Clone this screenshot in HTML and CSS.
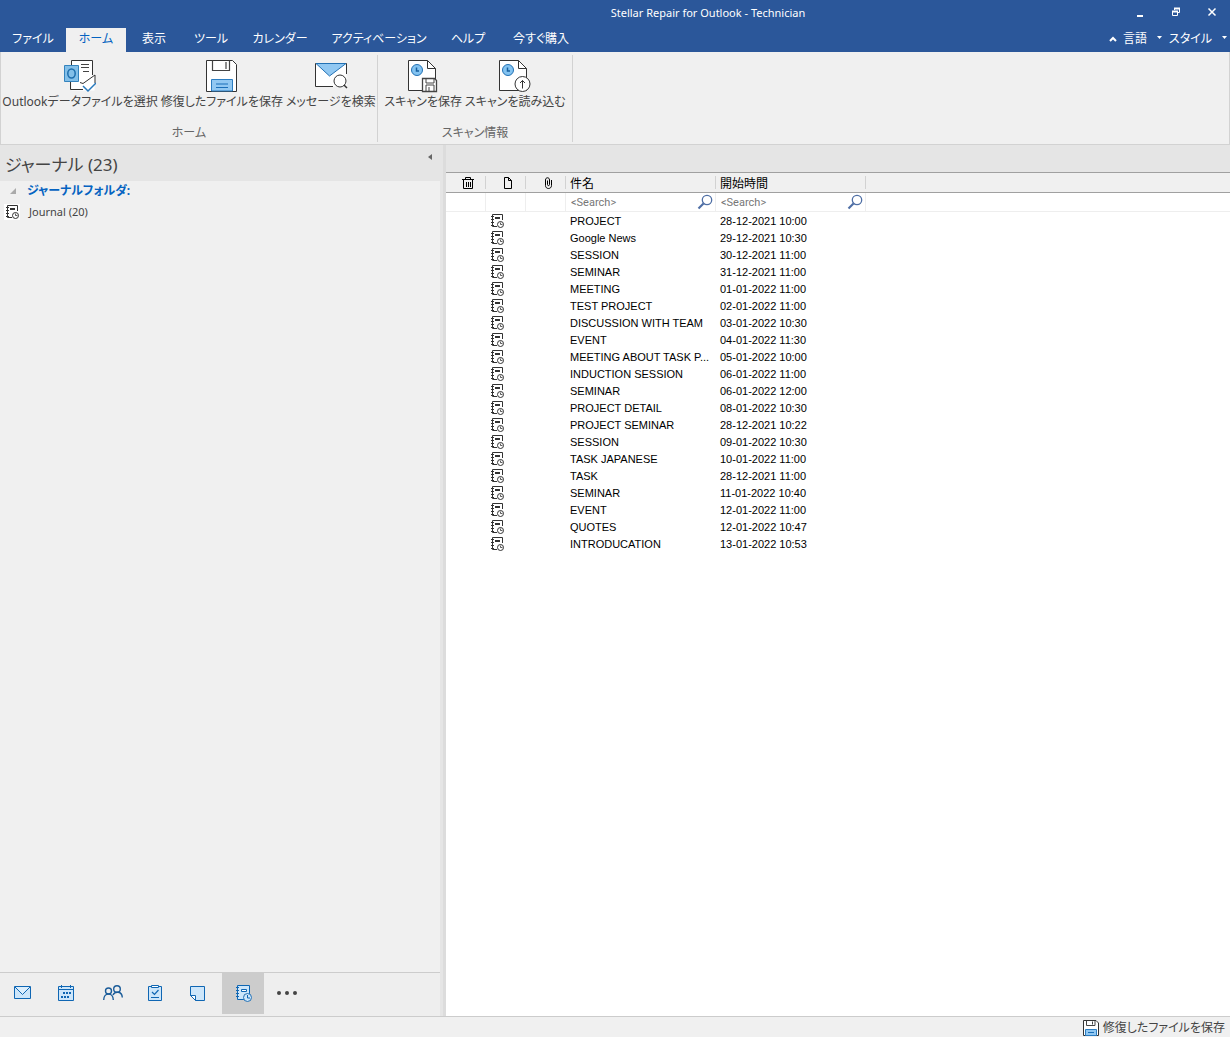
FILE: index.html
```html
<!DOCTYPE html>
<html lang="ja">
<head>
<meta charset="utf-8">
<title>Stellar Repair for Outlook - Technician</title>
<link rel="stylesheet" href="styles.css">
</head>
<body>
<svg class="sprite" aria-hidden="true">
  <symbol id="journal" viewBox="0 0 14 14">
    <path d="M12.500 6V.5h-10v12H7M1 2.500h3M1 5.500h3M1 8.500h3M1 11.500h3" fill="none" stroke="#333"/>
    <path d="M5 4h5" stroke="#333" stroke-width="2"/>
    <circle cx="10.500" cy="10.500" r="3" fill="#fff" stroke="#333"/>
    <path d="M10.500 8.500v2h2" fill="none" stroke="#333" stroke-width=".8"/>
  </symbol>
  <symbol id="lens" viewBox="0 0 16 16">
    <circle cx="10" cy="6" r="4.700" fill="none" stroke="#4f6fa5" stroke-width="1.300"/>
    <path d="M6.500 9.500L1.500 14.500" stroke="#4f6fa5" stroke-width="2.200"/>
  </symbol>
  <symbol id="floppy" viewBox="0 0 32 32">
    <path d="M.5.5h26l4 4v27H.5z" fill="#fff" stroke="#333"/>
    <path d="M6.500.5v10h17V.5M20 2v7" fill="none" stroke="#444" stroke-width="1.200"/>
    <path d="M5.500 31V19.500h21V31z" fill="#91c8f2" stroke="#2b7cc0"/>
    <path d="M10 24h12M10 27.500h12" stroke="#1b6fb8" stroke-width="1.200"/>
  </symbol>
  <symbol id="scan" viewBox="0 0 32 34">
    <path d="M1.500 1.500h19l8 8v22h-27z" fill="#fff" stroke="#333"/>
    <path d="M20.500 1.500v8h8" fill="none" stroke="#333"/>
    <circle cx="10" cy="11" r="5.500" fill="#83c3f1" stroke="#2271b4"/>
    <path d="M9.500 8.500v3.500H12" fill="none" stroke="#17609f" stroke-width="1.500"/>
  </symbol>
</svg>

<header class="titlebar">
  <div class="caption">
    <h1 class="caption-text">Stellar Repair for Outlook - Technician</h1>
    <div class="window-buttons">
      <button aria-label="Minimize"><svg width="10" height="10"><path d="M2 9h6" stroke="#fff" stroke-width="2"/></svg></button>
      <button aria-label="Restore"><svg width="10" height="10"><path d="M3.500 3V1.500h5v4H7" fill="none" stroke="#fff"/><path d="M3 1.500h6" stroke="#fff" stroke-width="2"/><path d="M1.500 4.500h5v4h-5z" fill="none" stroke="#fff"/><path d="M1 4.500h6" stroke="#fff" stroke-width="2"/></svg></button>
      <button aria-label="Close"><svg width="10" height="10"><path d="M1.500 1.500l7 7M8.500 1.500l-7 7" stroke="#fff" stroke-width="1.500"/></svg></button>
    </div>
  </div>
  <div class="tab-row">
    <nav class="tabs">
      <button>ファイル</button>
      <button class="selected">ホーム</button>
      <button>表示</button>
      <button>ツール</button>
      <button>カレンダー</button>
      <button>アクティベーション</button>
      <button>ヘルプ</button>
      <button>今すぐ購入</button>
    </nav>
    <div class="tab-tools">
      <button aria-label="Collapse ribbon"><svg width="8" height="8"><path d="M1 6l3-3 3 3" fill="none" stroke="#fff" stroke-width="2"/></svg></button>
      <button>言語<svg width="6" height="10"><path d="M0 2h5L2.500 5z" fill="#fff"/></svg></button>
      <button>スタイル<svg width="6" height="10"><path d="M0 2h5L2.500 5z" fill="#fff"/></svg></button>
    </div>
  </div>
</header>

<section class="ribbon">
  <div class="group group-home">
    <div class="commands">
      <button class="command">
        <svg width="32" height="34" viewBox="0 0 32 34">
          <path d="M7.500 1.500h21v16l2-2v16h-23z" fill="#fff"/>
          <path d="M7.500 6V1.500h21V16M6.500 22v8.500H19M16 23.500l3 1 12-8.500v8" fill="none" stroke="#333"/>
          <path d="M17 5.500h8M17 8.500h8M19 12.500h6" stroke="#444"/>
          <path d="M.5 6.500h14v16H.5z" fill="#83bfe8" stroke="#3483bd"/>
          <ellipse cx="7.500" cy="14.500" rx="3.700" ry="4.500" fill="none" stroke="#1d6ead" stroke-width="1.500"/>
          <path d="M19 27l5 5 8-8" fill="none" stroke="#2779bd" stroke-width="1.500"/>
        </svg>
        <span>Outlookデータファイルを選択</span>
      </button>
      <button class="command">
        <svg width="32" height="34" viewBox="0 -1 32 34"><use href="#floppy" width="32" height="32"/></svg>
        <span>修復したファイルを保存</span>
      </button>
      <button class="command">
        <svg width="34" height="34" viewBox="0 0 34 34">
          <path d="M1.500 4.500h31v23h-31z" fill="#fff"/>
          <path d="M19 27.500H1.500v-23h31V15" fill="none" stroke="#333"/>
          <path d="M2 4.500h30L15.500 17z" fill="#91c8f2" stroke="#2271b4"/>
          <circle cx="26" cy="22" r="6" fill="#fff" stroke="#333"/>
          <path d="M30 26l3 3" stroke="#333" stroke-width="1.500"/>
        </svg>
        <span>メッセージを検索</span>
      </button>
    </div>
    <div class="group-name">ホーム</div>
  </div>
  <div class="group group-scan">
    <div class="commands">
      <button class="command">
        <svg width="32" height="34" viewBox="0 0 32 34">
          <use href="#scan" width="32" height="34"/>
          <path d="M15.500 19.500h12l2 2v11h-14z" fill="#fff" stroke="#444" stroke-width="1.300"/>
          <path d="M19 20v4h8v-4M19 32v-6h8v6M22 28v4" fill="none" stroke="#444"/>
        </svg>
        <span>スキャンを保存</span>
      </button>
      <button class="command">
        <svg width="34" height="34" viewBox="0 0 34 34">
          <use href="#scan" width="32" height="34"/>
          <circle cx="24.500" cy="25" r="7.500" fill="#fff" stroke="#333"/>
          <path d="M24.500 29.500v-8M22 24l2.500-2.500L27 24" fill="none" stroke="#333"/>
        </svg>
        <span>スキャンを読み込む</span>
      </button>
    </div>
    <div class="group-name">スキャン情報</div>
  </div>
</section>

<main class="workspace">
  <aside class="sidebar">
    <div class="sidebar-head">
      <h2>ジャーナル (23)</h2>
      <button aria-label="Collapse pane"><svg width="6" height="8"><path d="M5 1v6L1 4z" fill="#666"/></svg></button>
    </div>
    <div class="folders">
      <button class="folder-root"><svg width="6" height="6"><path d="M6 0v6H0z" fill="#aaa"/></svg>ジャーナルフォルダ:</button>
      <button class="folder"><svg class="folder-icon" width="16" height="16" viewBox="-1 -1 16 16"><use href="#journal" width="14" height="14"/></svg>Journal (20)</button>
    </div>
    <nav class="modules">
      <button aria-label="Mail"><svg width="18" height="16"><path d="M1.500 1.500h16v12h-16z" fill="#cde6fa" stroke="#0f66b3"/><path d="M2 2l7.500 7.500L17 2" fill="#dceefc" stroke="#0f66b3"/></svg></button>
      <button aria-label="Calendar"><svg width="16" height="18"><path d="M.5 2.500h15v14H.5z" fill="#cde6fa" stroke="#0f66b3"/><path d="M0 5.500h16M3.500 1v3M12.500 1v3" stroke="#0f66b3"/><path d="M5 9h8M3 13h8" stroke="#0f66b3" stroke-width="2" stroke-dasharray="2 1"/></svg></button>
      <button aria-label="People"><svg width="20" height="18" fill="none" stroke="#1b5c99" stroke-width="1.400"><circle cx="5.500" cy="7" r="3"/><circle cx="14" cy="5" r="3.300"/><path d="M.7 16c0-8 9.600-8 9.600 0M10 11c2-4 9-4 9.300 2.500"/></svg></button>
      <button aria-label="Tasks"><svg width="16" height="18"><path d="M1.500 2.500h13v14h-13z" fill="#cde6fa" stroke="#0f66b3"/><path d="M4.500 1.500h7v2h-7z" fill="#fff" stroke="#0f66b3"/><path d="M5 8l2.500 2.500L11.500 6M4 13.500h8" fill="none" stroke="#0f66b3" stroke-width="1.200"/></svg></button>
      <button aria-label="Notes"><svg width="16" height="18"><path d="M1.500 2.500h14v14h-9l-5-5z" fill="#cde6fa" stroke="#0f66b3"/><path d="M1.500 11.500h5v5z" fill="#fff" stroke="#0f66b3"/></svg></button>
      <button class="current" aria-label="Journal"><svg width="18" height="18"><path d="M3.500 1.500h12v14h-12z" fill="#cde6fa" stroke="#0f66b3"/><path d="M2 3.500h3M2 6.500h3M2 9.500h3M2 12.500h3" stroke="#0f66b3"/><path d="M7.500 5.500h5v2h-5z" fill="#fff" stroke="#0f66b3"/><circle cx="13.500" cy="13.500" r="4" fill="#cde6fa" stroke="#2671b3"/><path d="M13.500 11v3H16" fill="none" stroke="#0f66b3"/></svg></button>
      <button aria-label="More"><svg width="22" height="8" fill="#444"><circle cx="3" cy="4" r="2"/><circle cx="11" cy="4" r="2"/><circle cx="19" cy="4" r="2"/></svg></button>
    </nav>
  </aside>

  <section class="content">
    <table class="entries">
      <colgroup><col class="narrow"><col class="narrow"><col class="narrow"><col class="wide"><col class="wide"><col></colgroup>
      <thead>
        <tr class="titles">
          <th class="glyph"><svg role="img" aria-label="Deleted" width="12" height="12"><path d="M0 2.500h12M3.500 2V.5h5V2M1.500 3v8.500h9V3M4.500 5v5M6.500 5v5M8.500 5v5" fill="none" stroke="#000"/></svg></th>
          <th class="glyph"><svg role="img" aria-label="Type" width="10" height="12"><path d="M1.500.5h4l3 3v8h-7zM5.500.5v3h3" fill="none" stroke="#000"/></svg></th>
          <th class="glyph"><svg role="img" aria-label="Attachment" width="8" height="12"><path d="M3.500 3.500v4c0 1.500 2 1.500 2 0V3c0-3-4-3-4 0v5.500c0 4 6 4 6 0V3" fill="none" stroke="#000"/></svg></th>
          <th class="label">件名</th>
          <th class="label">開始時間</th>
          <th class="rest"></th>
        </tr>
        <tr class="filters">
          <td></td><td></td><td></td>
          <td><label class="search"><input type="text" placeholder="&lt;Search&gt;" aria-label="件名"><svg width="16" height="16"><use href="#lens"/></svg></label></td>
          <td><label class="search"><input type="text" placeholder="&lt;Search&gt;" aria-label="開始時間"><svg width="16" height="16"><use href="#lens"/></svg></label></td>
          <td class="rest"></td>
        </tr>
      </thead>
      <tbody id="rows"></tbody>
    </table>
  </section>
</main>

<footer class="status">
  <button><svg width="16" height="16" viewBox="0 0 32 32"><path d="M1 1h25l5 5v25H1z" fill="#fff" stroke="#333" stroke-width="2"/><path d="M7 1v10h17V1M19 3v6" fill="none" stroke="#444" stroke-width="2"/><path d="M5 31V19h22v12z" fill="#91c8f2" stroke="#2b7cc0" stroke-width="2"/><path d="M10 25h12" stroke="#1b6fb8" stroke-width="2"/></svg>修復したファイルを保存</button>
</footer>
<script src="rows.js"></script>
</body>
</html>
```
FILE: rows.js
```js
const entries = [
  ["PROJECT", "28-12-2021 10:00"],
  ["Google News", "29-12-2021 10:30"],
  ["SESSION", "30-12-2021 11:00"],
  ["SEMINAR", "31-12-2021 11:00"],
  ["MEETING", "01-01-2022 11:00"],
  ["TEST PROJECT", "02-01-2022 11:00"],
  ["DISCUSSION WITH TEAM", "03-01-2022 10:30"],
  ["EVENT", "04-01-2022 11:30"],
  ["MEETING ABOUT TASK P...", "05-01-2022 10:00"],
  ["INDUCTION SESSION", "06-01-2022 11:00"],
  ["SEMINAR", "06-01-2022 12:00"],
  ["PROJECT DETAIL", "08-01-2022 10:30"],
  ["PROJECT SEMINAR", "28-12-2021 10:22"],
  ["SESSION", "09-01-2022 10:30"],
  ["TASK JAPANESE", "10-01-2022 11:00"],
  ["TASK", "28-12-2021 11:00"],
  ["SEMINAR", "11-01-2022 10:40"],
  ["EVENT", "12-01-2022 11:00"],
  ["QUOTES", "12-01-2022 10:47"],
  ["INTRODUCATION", "13-01-2022 10:53"]
];
document.getElementById("rows").innerHTML = entries.map(([subject, start]) =>
  `<tr><td></td><td class="type"><svg width="14" height="14"><use href="#journal"/></svg></td><td></td><td class="text">${subject}</td><td class="text">${start}</td><td></td></tr>`
).join("");
```
FILE: styles.css
```css
* { box-sizing: border-box; }
body {
  margin: 0;
  min-height: 100vh;
  display: flex;
  flex-direction: column;
  background: #f0f0f0;
  color: #444;
  font-family: "Noto Sans", "Noto Sans CJK JP", sans-serif;
  font-size: 12px;
  line-height: 18px;
  font-feature-settings: "palt";
}
button {
  border: 0;
  padding: 0;
  background: none;
  color: inherit;
  font: inherit;
  font-feature-settings: inherit;
  white-space: nowrap;
}
svg { display: block; flex: none; }
.sprite { width: 0; height: 0; position: absolute; }

.titlebar { background: #2b579a; color: #fff; }
.caption {
  display: grid;
  grid-template-columns: 1fr auto 1fr;
  height: 28px;
  padding-left: 186px;
}
.caption-text {
  grid-column: 2;
  margin: 0;
  font-size: 11px;
  font-weight: 400;
  line-height: 26px;
}
.window-buttons { display: flex; justify-content: flex-end; height: 24px; }
.window-buttons button {
  width: 36px;
  display: flex;
  align-items: center;
  justify-content: center;
}
.tab-row { display: flex; justify-content: space-between; height: 24px; }
.tabs {
  display: grid;
  grid-template-columns: 66px 60px 56px 58px 80px 118px 60px 86px;
}
.tabs button { padding-bottom: 2px; }
.tabs .selected { background: #f0f0f0; color: #0563c1; }
.tab-tools { display: flex; align-items: center; gap: 6px; padding: 0 2px 2px 0; }
.tab-tools button { display: flex; align-items: center; gap: 10px; }

.ribbon {
  display: flex;
  height: 93px;
  border: 1px solid #d2d2d2;
  border-top: 0;
}
.group {
  display: flex;
  flex-direction: column;
  justify-content: space-between;
  margin: 3px 0 2px;
  border-right: 1px solid #d2d2d2;
}
.group-home { min-width: 377px; }
.group-scan { min-width: 195px; }
.commands { display: flex; justify-content: center; gap: 3px; padding-top: 4px; }
.command { display: flex; flex-direction: column; align-items: center; }
.group-name { text-align: center; color: #666; }

.workspace { flex: 1; display: flex; background: #e5e5e5; }
.sidebar {
  width: 446px;
  flex: none;
  display: flex;
  flex-direction: column;
  padding-right: 3px;
  border-right: 3px solid #dcdcdc;
}
.sidebar-head {
  display: flex;
  justify-content: space-between;
  height: 36px;
  padding: 8px 7px 0 5px;
}
.sidebar-head h2 { margin: 0; font-size: 17px; font-weight: 400; line-height: 24px; }
.sidebar-head button { height: 8px; }
.folders { flex: 1; background: #f0f0f0; }
.folder-root, .folder { display: flex; align-items: center; }
.folder-root { padding-left: 10px; gap: 11px; height: 20px; color: #0563c1; font-weight: 700; }
.folder { padding-left: 4px; gap: 9px; height: 22px; font-size: 11px; }
.folder-icon { background: #fff; }
.modules {
  display: grid;
  grid-template-columns: 44px 44px 50px 34px 50px 42px 46px;
  height: 44px;
  padding-bottom: 2px;
  border-top: 1px solid #ccc;
  background: #eee;
}
.modules button { display: flex; align-items: center; justify-content: center; padding-bottom: 2px; }
.modules .current { background: #ccc; }

.content { flex: 1; min-width: 0; padding-top: 27px; background: linear-gradient(#e5e5e5 27px, #fff 27px); }
.entries {
  width: 100%;
  table-layout: fixed;
  border-collapse: separate;
  border-spacing: 0;
  color: #000;
  font-family: "Liberation Sans", "Noto Sans CJK JP", sans-serif;
  font-size: 11px;
  line-height: 16px;
}
.narrow { width: 40px; }
.wide { width: 150px; }
th, td { padding: 0; font-weight: 400; }
.titles th {
  height: 21px;
  border-top: 1px solid #a0a0a0;
  border-bottom: 1px solid #a0a0a0;
  background: linear-gradient(#d2d2d2, #d2d2d2) right center / 1px 13px no-repeat #f0f0f0;
}
.titles .glyph { padding-left: 4px; }
.titles svg { margin: 0 auto; }
.titles .label { padding: 2px 0 0 4px; text-align: left; font-size: 12px; }
.titles .rest { background: #f0f0f0; }
.filters td { height: 19px; border-right: 1px solid #eee; border-bottom: 1px solid #eee; }
.filters .rest { border-right: 0; }
.search { display: flex; align-items: center; padding: 0 2px 0 5px; }
.search input {
  flex: 1;
  min-width: 0;
  height: 18px;
  border: 0;
  padding: 0;
  background: none;
  font: 11px Roboto, sans-serif;
}
.search input::placeholder { color: #777; }
tbody td { height: 17px; }
.type { padding-left: 4px; }
.text { padding: 1px 0 0 4px; white-space: nowrap; }

.status {
  display: flex;
  justify-content: flex-end;
  height: 21px;
  padding: 1px 5px 0 0;
  border-top: 1px solid #ccc;
}
.status button { display: flex; align-items: center; gap: 4px; }
```
